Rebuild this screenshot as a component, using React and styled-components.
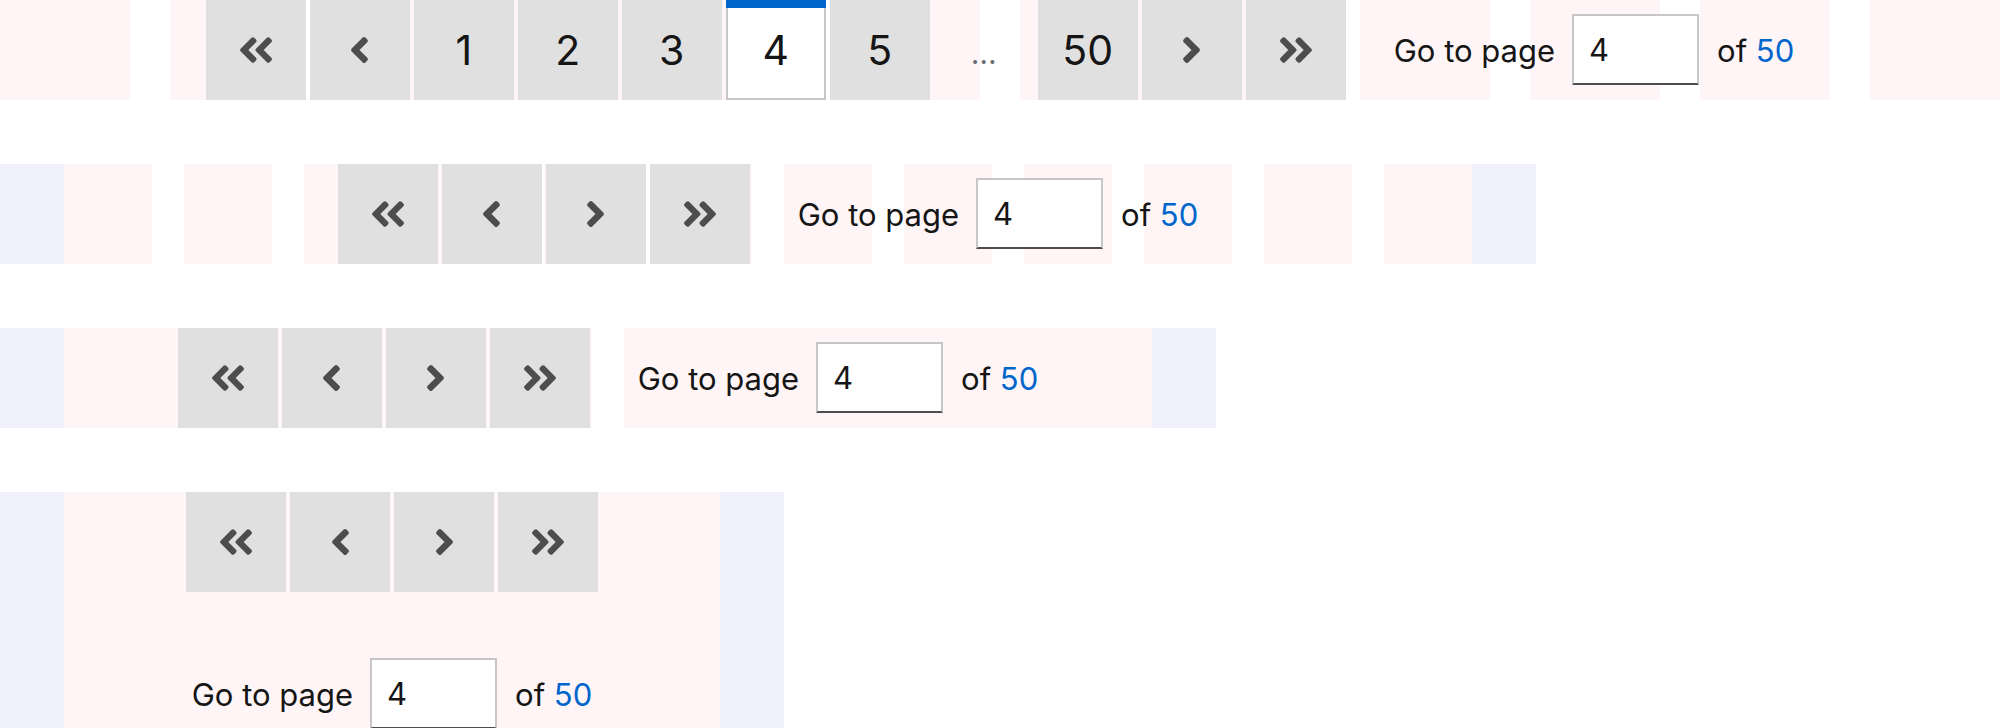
import React from "react";
import styled, { createGlobalStyle } from "styled-components";

const PINK = "#fff5f6";
const LAVENDER = "#f0f0fc";

const GlobalStyle = createGlobalStyle`
  html, body { margin: 0; padding: 0; background: #ffffff; }
  body { font-family: Inter, "Noto Sans", "Liberation Sans", sans-serif; color: #151515; }
  * { box-sizing: border-box; }
`;

const Page = styled.div`
  display: flex;
  flex-direction: column;
  gap: 64px;
  width: 2000px;
`;

const Frame = styled.section`
  width: ${(p) => p.$w}px;
  padding: 0 ${(p) => p.$pad}px;
  background: ${LAVENDER};
`;

const Columns = styled.div`
  display: flex;
  flex-direction: ${(p) => (p.$stacked ? "column" : "row")};
  align-items: center;
  justify-content: ${(p) => (p.$stacked ? "flex-start" : "center")};
  gap: ${(p) => (p.$stacked ? "52px" : "48px")};
  min-height: ${(p) => (p.$stacked ? "260px" : "100px")};
  background: ${(p) =>
    p.$gutter
      ? `repeating-linear-gradient(90deg, ${PINK} 0 ${p.$col}px, #ffffff ${p.$col}px ${p.$col + p.$gutter}px)`
      : PINK};
`;

const Nav = styled.nav`
  display: flex;
  align-items: flex-start;
  gap: 4px;
  height: 100px;
`;

const PageButton = styled.button`
  width: 100px;
  height: 100px;
  padding: 0;
  margin: 0;
  display: flex;
  align-items: center;
  justify-content: center;
  font-family: inherit;
  font-size: 41px;
  font-weight: 400;
  color: #151515;
  background: ${(p) => (p.$current ? "#ffffff" : "#e0e0e0")};
  border: none;
  box-shadow: ${(p) =>
    p.$current ? "inset 0 8px 0 #0066cc, inset 0 0 0 2px #c7c7c7" : "none"};
  cursor: pointer;
  svg { display: block; fill: #4d4d4d; }
`;

const Ellipsis = styled.div`
  width: 100px;
  height: 100px;
  padding-top: 38px;
  text-align: center;
  font-size: 30px;
  line-height: 30px;
  color: #6a6e73;
`;

const GoTo = styled.div`
  display: flex;
  align-items: center;
  height: 100px;
  font-size: 31px;
  color: #151515;
`;

const Label = styled.label`
  margin-right: 17px;
  white-space: nowrap;
`;

const PageInput = styled.input`
  width: 127px;
  height: 71px;
  padding: 0 0 0 15px;
  font-family: inherit;
  font-size: 31px;
  color: #151515;
  background: #ffffff;
  border: 2px solid #c7c7c7;
  border-bottom-color: #4d4d4d;
  border-radius: 0;
  outline: none;
  margin-top: -1px;
`;

const Of = styled.span`
  margin-left: 18px;
  white-space: nowrap;
`;

const Total = styled.a`
  color: #0066cc;
  text-decoration: none;
`;

const SINGLE =
  "M31.7 239l136-136c9.4-9.4 24.6-9.4 33.9 0l22.6 22.6c9.4 9.4 9.4 24.6 0 33.9L127.9 256l96.4 96.4c9.4 9.4 9.4 24.6 0 33.9L201.7 409c-9.4 9.4-24.6 9.4-33.9 0l-136-136c-9.5-9.4-9.5-24.6-.1-34z";

const DOUBLE =
  "M223.7 239l136-136c9.4-9.4 24.6-9.4 33.9 0l22.6 22.6c9.4 9.4 9.4 24.6 0 33.9L319.9 256l96.4 96.4c9.4 9.4 9.4 24.6 0 33.9L393.7 409c-9.4 9.4-24.6 9.4-33.9 0l-136-136c-9.5-9.4-9.5-24.6-.1-34zm-192 34l136 136c9.4 9.4 24.6 9.4 33.9 0l22.6-22.6c9.4-9.4 9.4-24.6 0-33.9L127.9 256l96.4-96.4c9.4-9.4 9.4-24.6 0-33.9L201.7 103c-9.4-9.4-24.6-9.4-33.9 0l-136 136c-9.5 9.4-9.5 24.6-.1 34z";

const AngleLeft = () => (
  <svg width="17" height="26" viewBox="24 96 208 320" aria-hidden="true">
    <path d={SINGLE} />
  </svg>
);

const AngleRight = () => (
  <svg width="17" height="26" viewBox="24 96 208 320" aria-hidden="true">
    <g transform="translate(256 0) scale(-1 1)">
      <path d={SINGLE} />
    </g>
  </svg>
);

const DoubleLeft = () => (
  <svg width="32" height="26" viewBox="24 96 400 320" aria-hidden="true">
    <path d={DOUBLE} />
  </svg>
);

const DoubleRight = () => (
  <svg width="32" height="26" viewBox="24 96 400 320" aria-hidden="true">
    <g transform="translate(448 0) scale(-1 1)">
      <path d={DOUBLE} />
    </g>
  </svg>
);

function Pagination({ numbered }) {
  return (
    <Nav aria-label="Pagination">
      <PageButton aria-label="First page"><DoubleLeft /></PageButton>
      <PageButton aria-label="Previous page"><AngleLeft /></PageButton>
      {numbered && (
        <>
          <PageButton>1</PageButton>
          <PageButton>2</PageButton>
          <PageButton>3</PageButton>
          <PageButton $current aria-current="page">4</PageButton>
          <PageButton>5</PageButton>
          <Ellipsis>…</Ellipsis>
          <PageButton>50</PageButton>
        </>
      )}
      <PageButton aria-label="Next page"><AngleRight /></PageButton>
      <PageButton aria-label="Last page"><DoubleRight /></PageButton>
    </Nav>
  );
}

function GoToPage() {
  return (
    <GoTo>
      <Label>Go to page</Label>
      <PageInput value="4" readOnly aria-label="Page number" />
      <Of>
        of <Total href="#">50</Total>
      </Of>
    </GoTo>
  );
}

const rows = [
  { w: 2000, pad: 0, col: 130, gutter: 40, numbered: true },
  { w: 1536, pad: 64, col: 88, gutter: 32 },
  { w: 1216, pad: 64, col: 528, gutter: 32 },
  { w: 784, pad: 64, col: 656, gutter: 0, stacked: true },
];

export default function App() {
  return (
    <>
      <GlobalStyle />
      <Page>
        {rows.map((r, i) => (
          <Frame key={i} $w={r.w} $pad={r.pad}>
            <Columns $col={r.col} $gutter={r.gutter} $stacked={r.stacked}>
              <Pagination numbered={r.numbered} />
              <GoToPage />
            </Columns>
          </Frame>
        ))}
      </Page>
    </>
  );
}
